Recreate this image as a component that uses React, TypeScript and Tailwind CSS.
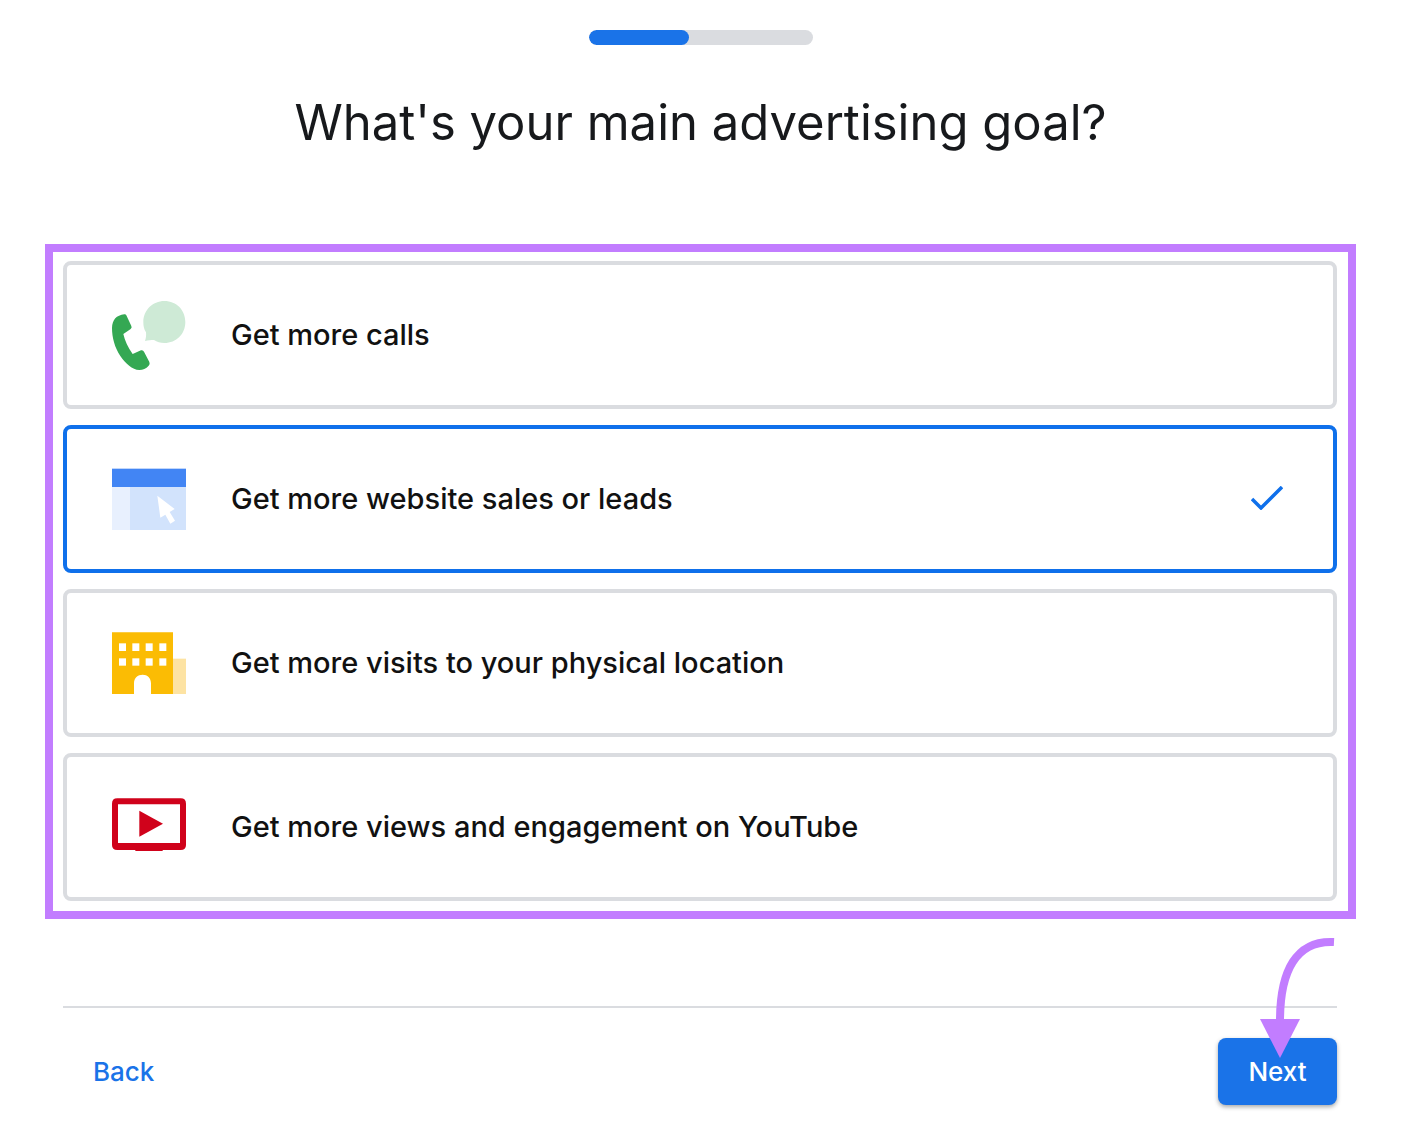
import { useState } from "react";
import type { ReactNode } from "react";

interface Goal {
  id: string;
  label: string;
  icon: ReactNode;
}

const CallIcon = () => (
  <svg viewBox="216 186 222 222" className="h-[74px] w-[74px]" aria-hidden="true">
    <path
      d="M373 195C410 195 436 223 436 258C436 294 409 321 373 321C361 321 351 318 342 312C333 312 325 313 315 315C318 307 319 298 318 289C312 280 310 270 310 258C310 223 338 195 373 195Z"
      fill="#ceead6"
    />
    <path
      d="M253 235Q257 234 259 238L274 270Q277 276 271 280L250 294Q257 325 278 354L303 343Q309 341 312 347L328 378Q331 385 326 389Q314 402 298 402C276 401 258 384 241 360C224 334 216 305 216 276C217 251 229 238 253 235Z"
      fill="#34a853"
    />
  </svg>
);

const WebsiteIcon = () => (
  <svg viewBox="216 126 222 222" className="h-[74px] w-[74px]" aria-hidden="true">
    <rect x="216" y="146" width="222" height="56" fill="#4285f4" />
    <rect x="216" y="201" width="55" height="129" fill="#e8f0fe" />
    <rect x="270" y="201" width="168" height="129" fill="#d2e3fc" />
    <path d="M352 227L404 267L389 276L405 302L391 311L376 284L361 293Z" fill="#fff" />
  </svg>
);

const LocationIcon = () => (
  <svg viewBox="66 48 222 222" className="h-[74px] w-[74px]" aria-hidden="true">
    <rect x="248" y="146" width="40" height="106" fill="#fde3a3" />
    <path d="M66 67H249V252H183V220C183 204 172 194 158 194C143 194 132 204 132 220V252H66Z" fill="#fbbc04" />
    <g fill="#fff">
      <rect x="87" y="100" width="21" height="23" />
      <rect x="127" y="100" width="21" height="23" />
      <rect x="167" y="100" width="21" height="23" />
      <rect x="208" y="100" width="21" height="23" />
      <rect x="87" y="145" width="21" height="22" />
      <rect x="127" y="145" width="21" height="22" />
      <rect x="167" y="145" width="21" height="22" />
      <rect x="208" y="145" width="21" height="22" />
    </g>
  </svg>
);

const YouTubeIcon = () => (
  <svg viewBox="66 30 222 222" className="h-[74px] w-[74px]" aria-hidden="true">
    <path
      fillRule="evenodd"
      d="M82 55H272Q288 55 288 71V195Q288 210 272 210H218V213H136V210H82Q66 210 66 195V71Q66 55 82 55ZM84 73V189H270V73Z"
      fill="#d0021b"
    />
    <path d="M148 92L219 131L148 170Z" fill="#d0021b" />
  </svg>
);

const CheckIcon = () => (
  <svg viewBox="0 0 32 24" className="mr-[50px] mb-0.5 h-6 w-8" aria-hidden="true">
    <path d="M1 13L10 22L31 1" fill="none" stroke="#0f70eb" strokeWidth="3.5" />
  </svg>
);

const goals: Goal[] = [
  { id: "calls", label: "Get more calls", icon: <CallIcon /> },
  { id: "website", label: "Get more website sales or leads", icon: <WebsiteIcon /> },
  { id: "visits", label: "Get more visits to your physical location", icon: <LocationIcon /> },
  { id: "youtube", label: "Get more views and engagement on YouTube", icon: <YouTubeIcon /> },
];

const App: React.FC = () => {
  const [selected, setSelected] = useState("website");

  return (
    <main className="w-full bg-white pt-[30px] pr-[47px] pb-4 pl-[45px] font-['Inter',sans-serif]">
      {/* Progress */}
      <div className="mx-auto h-[15px] w-56 overflow-hidden rounded-full bg-[#dadce0]">
        <div className="h-full w-[45%] rounded-full bg-[#1a73e8]"></div>
      </div>

      <h1 className="mt-12 text-center text-[49px] leading-[60px] text-[#17191c]">
        What's your main advertising goal?
      </h1>

      {/* Goals */}
      <fieldset className="mt-[91px] flex flex-col gap-4 border-8 border-[#c27dff] pt-[9px] pr-[11px] pb-[10px] pl-[10px]">
        {goals.map((goal) => (
          <label
            key={goal.id}
            htmlFor={goal.id}
            className="relative flex h-[148px] cursor-pointer items-center gap-[45px] rounded-lg border-4 border-[#dadce0] pl-[45px] has-checked:border-[#0f70eb]"
          >
            <input
              type="radio"
              id={goal.id}
              name="goal"
              checked={selected === goal.id}
              onChange={() => setSelected(goal.id)}
              className="sr-only"
            />
            {goal.icon}
            <span className="flex-1 text-[29px] leading-10 font-medium text-[#111]">{goal.label}</span>
            {selected === goal.id && <CheckIcon />}
          </label>
        ))}
      </fieldset>

      {/* Footer */}
      <footer className="mt-[87px] mr-[19px] ml-[18px] flex items-center justify-between border-t-2 border-[#dadce0] pt-[30px]">
        <button type="button" className="px-[30px] text-[26px] leading-10 font-medium text-[#1a73e8]">
          Back
        </button>
        <div className="relative">
          <button
            type="button"
            className="h-[67px] w-[119px] rounded-lg bg-[#1a73e8] text-[26px] font-medium text-white shadow-[0_2px_4px_rgba(60,64,67,0.45)]"
          >
            Next
          </button>
          <svg
            viewBox="0 0 76 122"
            className="pointer-events-none absolute right-px bottom-[46px] h-[122px] w-[76px]"
            aria-hidden="true"
          >
            <path d="M74 5C36 3 20 34 20 84" fill="none" stroke="#c27dff" strokeWidth="8" />
            <path d="M0 82H40L20 121Z" fill="#c27dff" />
          </svg>
        </div>
      </footer>
    </main>
  );
};

export default App;
